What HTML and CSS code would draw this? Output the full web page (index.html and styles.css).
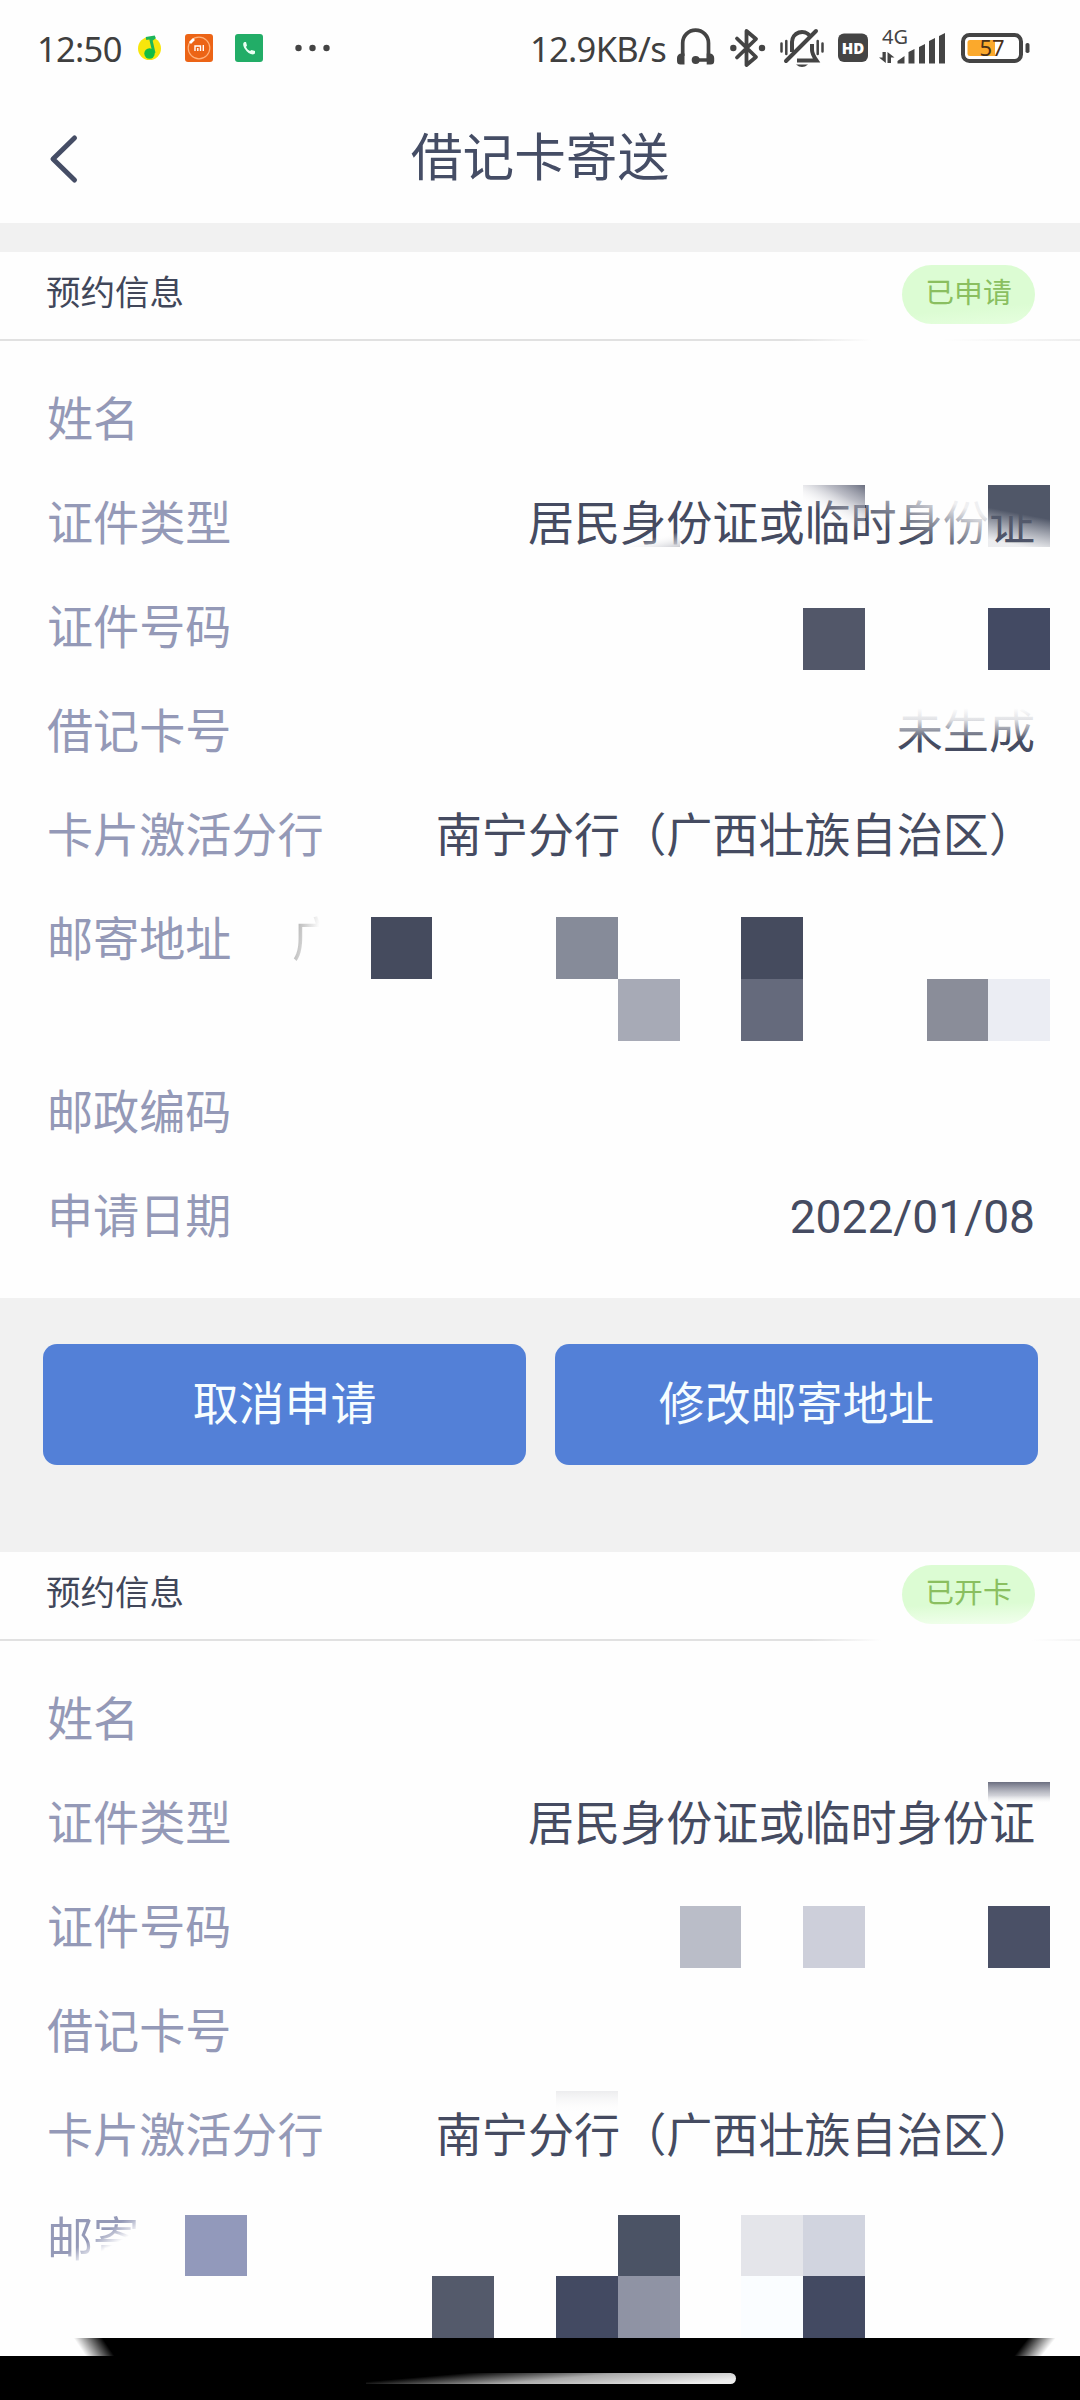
FILE: index.html
```html
<!DOCTYPE html>
<html lang="zh-CN">
<head>
<meta charset="utf-8">
<title>借记卡寄送</title>
<link rel="stylesheet" href="styles.css">
</head>
<body>
<div class="screen">
  <div class="status">
    <span class="time">12:50</span>
    <svg class="ic music" width="24" height="60" viewBox="0 0 24 60"><circle cx="11.5" cy="28.5" r="11.5" fill="#f7e60c"/><path d="M8 18.5l9-1.5-4 3 3 13" fill="none" stroke="#1eb559" stroke-width="3"/><circle cx="11.5" cy="33.5" r="5.2" fill="#12bd43"/></svg>
    <svg class="ic mi" width="28" height="60" viewBox="0 0 28 60"><rect y="14" width="28" height="28" rx="3" fill="#ec6416"/><circle cx="14" cy="28" r="10.8" fill="none" stroke="#ffb27c" stroke-width="1.2"/><path d="M5 23l4-4" stroke="#fff" stroke-width="2.6"/><path d="M10 31v-5h5.5v5M12.8 28v3M18.3 25v6" fill="none" stroke="#fff" stroke-width="1.4"/></svg>
    <svg class="ic call" width="28" height="60" viewBox="0 0 28 60"><rect y="14" width="28" height="28" rx="3" fill="#22ad67"/><path d="M9.500 22c-2 1-1.500 4 .5 7s5 5.500 8 5.500l2-1v-2.500l-3.500-1-1.500 1c-2-1-3-2-4-4l1-1.500-1-3.500z" fill="#eafff2"/></svg>
    <svg class="ic dots" width="36" height="60" viewBox="0 0 36 60" fill="#444"><circle cx="3.500" cy="28" r="3.200"/><circle cx="17.500" cy="28" r="3.200"/><circle cx="31.500" cy="28" r="3.200"/></svg>
    <span class="speed">12.9KB/s</span>
    <svg class="ic phones" width="38" height="60" viewBox="0 0 38 60"><path d="M5.700 36V23a12.900 12.900 0 0 1 25.800 0v17H19" fill="none" stroke="#444" stroke-width="3.700"/><path d="M7.500 33.500v11h-4a3.500 3.500 0 0 1-3.500-3.500v-3a4.500 4.500 0 0 1 4.500-4.500zM29.700 33.500v11h4a3.500 3.500 0 0 0 3.500-3.500v-3a4.500 4.500 0 0 0-4.500-4.500z" fill="#444"/><circle cx="18.700" cy="40" r="4" fill="#444"/></svg>
    <svg class="ic bt" width="36" height="60" viewBox="0 0 36 60"><path d="M7 18.500l19 18.500-9.500 8V11l9.500 8L7 37.500" fill="none" stroke="#444" stroke-width="3.800" stroke-linejoin="round" stroke-linecap="round"/><circle cx="3.300" cy="28" r="3.200" fill="#444"/><circle cx="32" cy="28" r="3.200" fill="#444"/></svg>
    <svg class="ic bell" width="44" height="60" viewBox="0 0 44 60"><path d="M1.500 23.500v8M6.300 21v13M37.700 21v13M42.500 23.500v8" stroke="#444" stroke-width="2.500" stroke-linecap="round"/><path d="M12 32V22a10 10 0 0 1 18-6M32 24v6q0 4 4.500 10.500H17" fill="none" stroke="#444" stroke-width="4"/><path d="M36 11L6 41" stroke="#444" stroke-width="4" stroke-linecap="round"/><path d="M16 44.500h12q-6 5-12 0z" fill="#444"/></svg>
    <svg class="ic hd" width="31" height="60" viewBox="0 0 31 60"><rect y="13.500" width="30" height="28.500" rx="6" fill="#444"/><text x="15" y="33.500" text-anchor="middle" class="hd-t">HD</text></svg>
    <svg class="ic signal" width="68" height="60" viewBox="0 0 68 60"><text x="3" y="23.500" class="net">4G</text><g fill="#444"><path d="M3.500 32h3.300v11L0 37.500h3.500zM8.500 43V32l7 5.500h-3.500V43zM18.500 43.500v-2.500l7-5v7.500zM29.500 43.500V32l6-3v14.500zM40 43.500V27l6-3v19.500zM50 43.500V21l6-3v25.500zM60 43.500V16l6-3v30.500z"/></g></svg>
    <svg class="ic battery" width="68" height="60" viewBox="0 0 68 60"><rect x="2" y="15" width="58" height="26" rx="6.500" fill="#fff" stroke="#444" stroke-width="4"/><path d="M9 20h25v16H9a2.500 2.500 0 0 1-2.500-2.500v-11A2.500 2.500 0 0 1 9 20z" fill="#fba92c"/><rect x="64.500" y="23" width="4" height="10" rx="1.800" fill="#444"/><text x="31" y="36" text-anchor="middle" class="pct">57</text></svg>
  </div>
  <header class="nav">
    <svg class="back" width="30" height="50" viewBox="0 0 30 50"><path d="M25.500 4L4 25l21.500 21" fill="none" stroke="#454d65" stroke-width="5" stroke-linecap="round" stroke-linejoin="round"/></svg>
    <h1>借记卡寄送</h1>
  </header>
  <section class="card">
    <div class="head head-a"><h2>预约信息</h2><span class="pill">已申请</span></div>
    <dl>
      <div class="row"><dt>姓名</dt></div>
      <div class="row"><dt>证件类型</dt><dd>居民身份证或临时身份证</dd></div>
      <div class="row"><dt>证件号码</dt></div>
      <div class="row"><dt>借记卡号</dt><dd>未生成</dd></div>
      <div class="row"><dt>卡片激活分行</dt><dd>南宁分行（广西壮族自治区）</dd></div>
      <div class="row tall"><dt>邮寄地址</dt><dd class="ghost">广</dd></div>
      <div class="row"><dt>邮政编码</dt></div>
      <div class="row"><dt>申请日期</dt><dd class="date">2022/01/08</dd></div>
    </dl>
  </section>
  <div class="actions"><button>取消申请</button><button>修改邮寄地址</button></div>
  <section class="card last">
    <div class="head head-b"><h2>预约信息</h2><span class="pill pill-b">已开卡</span></div>
    <dl>
      <div class="row"><dt>姓名</dt></div>
      <div class="row"><dt>证件类型</dt><dd>居民身份证或临时身份证</dd></div>
      <div class="row"><dt>证件号码</dt></div>
      <div class="row"><dt>借记卡号</dt></div>
      <div class="row"><dt>卡片激活分行</dt><dd>南宁分行（广西壮族自治区）</dd></div>
      <div class="row"><dt class="cut">邮寄</dt></div>
    </dl>
  </section>
  <footer class="home"><i></i></footer>

  <!-- privacy mosaic laid over the personal data -->
  <svg class="mosaic" width="1080" height="2400" viewBox="0 0 1080 2400">
    <defs>
      <linearGradient id="g1" gradientUnits="userSpaceOnUse" x1="865" y1="482" x2="842" y2="524"><stop offset="0" stop-color="#5b6072"/><stop offset=".45" stop-color="#9fa1ae" stop-opacity=".7"/><stop offset="1" stop-color="#fff" stop-opacity="0"/></linearGradient>
      <linearGradient id="g2" gradientUnits="userSpaceOnUse" x1="1022" y1="485" x2="1010" y2="547"><stop offset="0" stop-color="#505768"/><stop offset=".45" stop-color="#505768"/><stop offset=".95" stop-color="#6b7183" stop-opacity=".12"/></linearGradient>
      <linearGradient id="g3" x1="0" y1="0" x2="0" y2="1"><stop offset="0" stop-color="#fefefe"/><stop offset=".35" stop-color="#fefefe" stop-opacity=".85"/><stop offset="1" stop-color="#fefefe" stop-opacity="0"/></linearGradient>
      <linearGradient id="g7" gradientUnits="userSpaceOnUse" x1="945" y1="500" x2="928" y2="545"><stop offset="0" stop-color="#fefefe" stop-opacity=".92"/><stop offset=".4" stop-color="#fefefe" stop-opacity=".5"/><stop offset="1" stop-color="#fefefe" stop-opacity="0"/></linearGradient>
      <linearGradient id="g4" x1="0" y1="0" x2="0" y2="1"><stop offset="0" stop-color="#6b6e80"/><stop offset=".5" stop-color="#c5c6ce" stop-opacity=".8"/><stop offset=".8" stop-color="#fff" stop-opacity="0"/></linearGradient>
      <linearGradient id="g5" x1="0" y1="0" x2="0" y2="1"><stop offset="0" stop-color="#ececee"/><stop offset="1" stop-color="#fff" stop-opacity="0"/></linearGradient>
      <linearGradient id="g6" x1="1" y1="1" x2=".4" y2="0"><stop offset="0" stop-color="#c9cad0"/><stop offset=".5" stop-color="#fff" stop-opacity="0"/></linearGradient>
    </defs>
    <rect x="866" y="500" width="122" height="46" fill="url(#g7)"/>
    <rect x="803" y="485" width="62" height="62" fill="url(#g1)"/>
    <rect x="618" y="524" width="62" height="23" fill="url(#g6)"/>
    <rect x="988" y="485" width="62" height="62" fill="url(#g2)"/>
    <rect x="803" y="608" width="62" height="62" fill="#525769"/>
    <rect x="988" y="608" width="62" height="62" fill="#434a63"/>
    <rect x="890" y="708" width="148" height="33" fill="url(#g3)"/>
    <rect x="371" y="917" width="61" height="62" fill="#454b5e"/>
    <rect x="556" y="917" width="62" height="62" fill="#868b99"/>
    <rect x="741" y="917" width="62" height="62" fill="#454b5e"/>
    <rect x="618" y="979" width="62" height="62" fill="#a7aab6"/>
    <rect x="741" y="979" width="62" height="62" fill="#656a7c"/>
    <rect x="927" y="979" width="61" height="62" fill="#8a8d99"/>
    <rect x="988" y="979" width="62" height="62" fill="#ebedf3"/>
    <rect x="988" y="1782" width="62" height="27" fill="url(#g4)"/>
    <rect x="680" y="1906" width="61" height="62" fill="#babdc8"/>
    <rect x="803" y="1906" width="62" height="62" fill="#cdcfda"/>
    <rect x="988" y="1906" width="62" height="62" fill="#4a5066"/>
    <rect x="556" y="2091" width="62" height="23" fill="url(#g5)"/>
    <rect x="185" y="2215" width="62" height="61" fill="#9299bb"/>
    <rect x="618" y="2215" width="62" height="61" fill="#4b5365"/>
    <rect x="741" y="2215" width="62" height="61" fill="#e4e5ea"/>
    <rect x="803" y="2215" width="62" height="61" fill="#d1d4df"/>
    <rect x="432" y="2276" width="62" height="62" fill="#545a6b"/>
    <rect x="556" y="2276" width="62" height="62" fill="#434a62"/>
    <rect x="618" y="2276" width="62" height="62" fill="#8f93a4"/>
    <rect x="741" y="2276" width="62" height="62" fill="#fafdff"/>
    <rect x="803" y="2276" width="62" height="62" fill="#434a62"/>
  </svg>
</div>
</body>
</html>
```
FILE: styles.css
```css
* { box-sizing: border-box; }
body { margin: 0; background: #fff; font-family: Roboto, "Noto Sans CJK SC", sans-serif; }
h1, h2, dl, dd { margin: 0; font-weight: 400; }
.screen { position: relative; width: 1080px; height: 2400px; overflow: hidden; background: #fefefe; display: flex; flex-direction: column; }

.status { height: 96px; display: flex; align-items: flex-start; padding: 20px 0 0 37px; color: #3f3f3f; font-family: "Noto Sans", sans-serif; flex: none; }
.time, .speed { font-size: 34.500px; line-height: 58px; white-space: nowrap; }
.time { width: 101px; letter-spacing: -0.700px; }
.speed { width: 146px; margin-left: 199px; letter-spacing: -0.700px; }
.ic { flex: none; }
.mi { margin-left: 23px; }
.call { margin-left: 22px; }
.dots { margin-left: 32px; }
.phones { margin-left: 1px; }
.bt { margin-left: 15px; }
.bell { margin-left: 14px; }
.hd { margin-left: 14px; }
.signal { margin-left: 10px; }
.battery { margin-left: 14px; overflow: visible; }
.hd-t { font: 800 15px "Open Sans", sans-serif; fill: #fff; }
.net { font: 20px "Noto Sans", sans-serif; fill: #444; }
.pct { font: 22px "Noto Sans", sans-serif; fill: #4a3018; }

.nav { height: 127px; flex: none; display: grid; grid-template-columns: 100px 1fr 100px; align-items: center; }
.back { margin-left: 49px; margin-bottom: 2px; }
h1 { font-size: 51.700px; line-height: 70px; text-align: center; color: #454d65; padding-bottom: 2px; }

.card { border-top: 29px solid #f1f1f1; flex: none; }
.head { height: 89px; display: flex; justify-content: space-between; padding: 13px 45px 0 46px; border: 0 solid; border-bottom-width: 2px; }
.head-a { border-image: linear-gradient(90deg, #e1e1e1 0 790px, #fefefe 870px 940px, #ededed 1080px) 2; }
.head-b { border-image: linear-gradient(90deg, #e1e1e1 0 810px, #fefefe 880px 1030px, #f3f3f3 1080px) 2; }
h2 { font-size: 34.500px; line-height: 56px; color: #41475a; }
.pill { width: 133px; height: 59px; border-radius: 30px; background: linear-gradient(175deg, #dcfcd3 70%, #e6ffdf 100%); color: #8abf60; font-size: 28.800px; line-height: 57px; text-align: center; }
.pill-b { background: linear-gradient(178deg, #dcfcd3 65%, #f2ffee 100%); }
dl { padding: 25px 45px 31px 47px; }
.row { height: 104px; display: flex; justify-content: space-between; font-size: 46.100px; line-height: 109px; white-space: nowrap; }
.tall { height: 173px; }
dt { color: #9499b7; }
dd { color: #454b61; }
.ghost { margin-right: 697px; background: linear-gradient(100deg, #aaa 10%, #fefefe 45%); background-clip: text; -webkit-background-clip: text; color: transparent; }
.cut { background: linear-gradient(150deg, #9499b7 0 50%, #fefefe 62%); background-clip: text; -webkit-background-clip: text; color: transparent; }

.actions { background: #f1f1f1; height: 225px; flex: none; display: grid; grid-template-columns: 1fr 1fr; gap: 29px; padding: 46px 42px 58px 43px; }
button { border: 0; border-radius: 14px; background: #5380d7; color: #f6fdff; font: inherit; font-size: 45.900px; line-height: 60px; padding: 0 0 2px; }

.last { height: 815px; overflow: hidden; }
.home { position: absolute; left: 0; right: 0; bottom: 0; height: 62px; display: flex; justify-content: flex-end; align-items: flex-end; padding: 0 344px 16px 0; background: linear-gradient(#000, #000) 0 18px / 100% 44px no-repeat, linear-gradient(56deg, transparent 71px, #000 95px) 0 0 / 540px 18px no-repeat, linear-gradient(-52deg, transparent 30px, #000 52px) 540px 0 / 540px 18px no-repeat; }
.home i { width: 370px; height: 11px; border-radius: 0 6px 6px 0; background: linear-gradient(175deg, #000 20%, #aaa 52%, #eee 90%); }
.mosaic { position: absolute; left: 0; top: 0; }
```
